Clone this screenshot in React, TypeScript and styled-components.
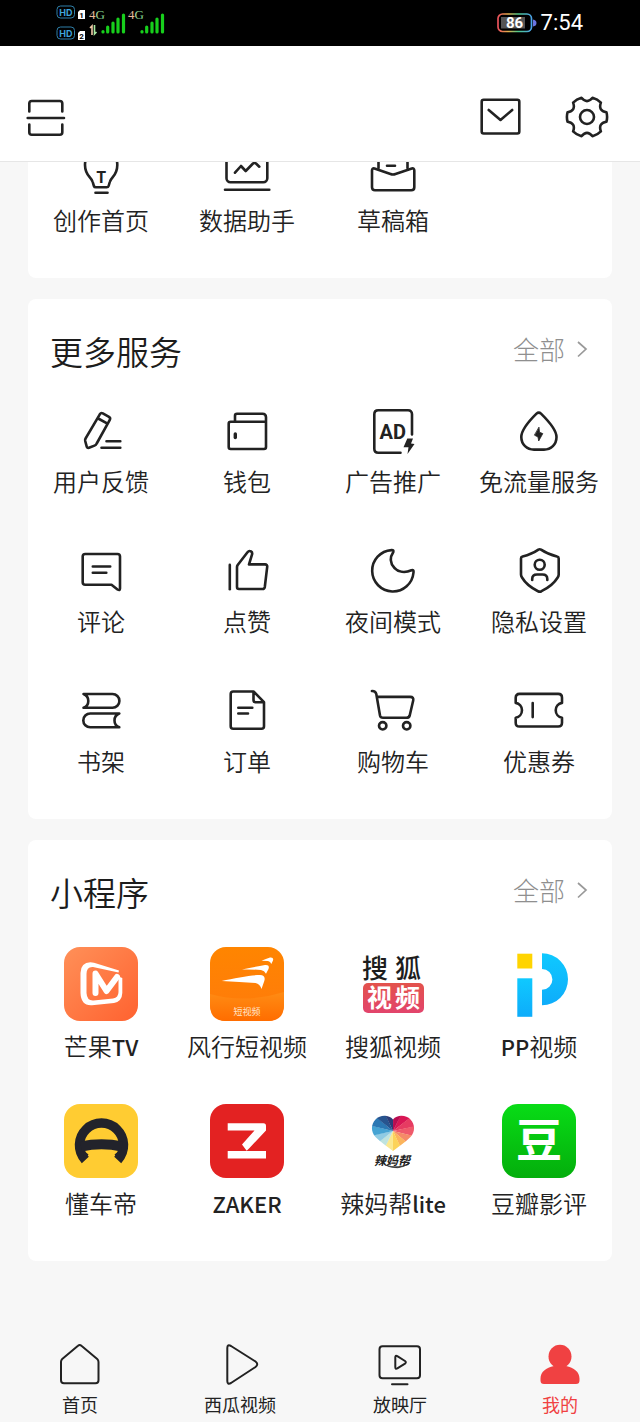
import React from "react";
import styled, { createGlobalStyle } from "styled-components";

const sans = `"Noto Sans CJK SC", "Noto Sans", sans-serif`;

const GlobalStyle = createGlobalStyle`
  * { box-sizing: border-box; }
  body { margin: 0; background: #f7f7f7; font-family: ${sans}; color: #222; }
  button { font: inherit; color: inherit; background: none; border: 0; padding: 0; cursor: pointer; }
  svg { display: block; }
`;

const Page = styled.div`
  display: flex;
  flex-direction: column;
  min-height: 100vh;
`;

const StatusBar = styled.div`
  display: flex;
  justify-content: space-between;
  height: 46px;
  padding: 0 57px 0 56px;
  background: #000;
`;

const StatusGroup = styled.div<{ $gap?: number }>`
  display: flex;
  align-items: center;
  gap: ${(p) => p.$gap ?? 0}px;
`;

const SimList = styled.div`
  display: flex;
  flex-direction: column;
  gap: 6px;
  width: 32px;
`;

const Clock = styled.time`
  font: 400 22px/24px Roboto, sans-serif;
  color: #fff;
`;

const Header = styled.header`
  display: flex;
  align-items: center;
  justify-content: space-between;
  padding: 49px 31px 22px 24px;
  background: #fff;
  border-bottom: 1px solid #e6e6e6;
`;

const HeaderActions = styled.div`
  display: flex;
  gap: 42px;
`;

const Main = styled.main`
  flex: 1;
  display: flex;
  flex-direction: column;
  gap: 21px;
  padding: 0 28px 24px;
  overflow: hidden;
`;

const Card = styled.section<{ $scrolled?: boolean }>`
  padding: ${(p) => (p.$scrolled ? 0 : 28)}px 0 42px;
  margin-top: ${(p) => (p.$scrolled ? -17 : 0)}px;
  background: #fff;
  border-radius: 8px;
`;

const CardHead = styled.div`
  display: flex;
  align-items: flex-start;
  justify-content: space-between;
  padding: 0 22px;
  margin-bottom: 31px;
`;

const Title = styled.h2`
  margin: 0;
  font-size: 33px;
  font-weight: 350;
  line-height: 48px;
  color: #1c1c1c;
`;

const MoreButton = styled.button`
  display: flex;
  align-items: center;
  gap: 10px;
  font-size: 26px;
  font-weight: 300;
  line-height: 44px;
  color: #8f8f8f;
`;

const Grid = styled.div<{ $rowGap: number }>`
  display: grid;
  grid-template-columns: repeat(4, 1fr);
  row-gap: ${(p) => p.$rowGap}px;
`;

const Cell = styled.button`
  display: flex;
  flex-direction: column;
  align-items: center;
  gap: 9px;
`;

const Label = styled.span`
  font-size: 24px;
  font-weight: 350;
  line-height: 32px;
  white-space: nowrap;
`;

const Latin = styled.span`
  font-size: 22px;
  font-weight: 500;
`;

const TabBar = styled.nav`
  display: grid;
  grid-template-columns: repeat(4, 1fr);
  padding: 8px 0 6px;
`;

const Tab = styled.button<{ $active?: boolean }>`
  display: flex;
  flex-direction: column;
  align-items: center;
  gap: 5px;
  font-size: 18px;
  line-height: 24px;
  color: ${(p) => (p.$active ? "#f04142" : "#222")};
`;

const LineSvg = styled.svg`
  fill: none;
  stroke: #222;
  stroke-width: 2.6;
  stroke-linecap: round;
  stroke-linejoin: round;
  text {
    fill: #222;
    stroke: none;
  }
`;

const TabSvg = styled(LineSvg)`
  stroke-width: 2;
`;

type Kids = { children: React.ReactNode };
const Icon = ({ children }: Kids) => (
  <LineSvg width="50" height="50" viewBox="0 0 50 50" aria-hidden>{children}</LineSvg>
);
const BarIcon = ({ children }: Kids) => (
  <LineSvg width="44" height="44" viewBox="0 0 44 44" aria-hidden>{children}</LineSvg>
);
const TabIcon = ({ children }: Kids) => (
  <TabSvg width="44" height="44" viewBox="0 0 44 44" aria-hidden>{children}</TabSvg>
);
const Logo = ({ children }: Kids) => (
  <svg width="74" height="74" viewBox="0 0 74 74" aria-hidden>{children}</svg>
);

const polar = (cx: number, cy: number, r: number, deg: number) => {
  const a = (deg * Math.PI) / 180;
  return `${(cx + r * Math.cos(a)).toFixed(2)} ${(cy + r * Math.sin(a)).toFixed(2)}`;
};

const gearPath =
  [0, 60, 120, 180, 240, 300]
    .map((a, i) => {
      const c = (r: number, d: number) => polar(22, 22, r, d);
      return `${i ? "" : `M${c(20, a - 14)}`} Q${c(20.8, a)} ${c(20, a + 14)} Q${c(12.6, a + 30)} ${c(20, a + 46)}`;
    })
    .join(" ") + "Z";

const creation = [
  {
    label: "创作首页",
    icon: (
      <Icon>
        <path d="M9 20C9 10 16 4 25.200 4S41.300 10 41.300 20C41.300 31 35 32 33.800 37L32.600 41Q32.200 42.300 30.700 42.300H19.800Q18.300 42.300 17.900 41L16.700 37C15.500 32 9 31 9 20Z" />
        <path d="M19.500 47.700H31.500" />
        <text x="25.200" y="37.800" fontSize="16" fontWeight="700" textAnchor="middle">T</text>
      </Icon>
    ),
  },
  {
    label: "数据助手",
    icon: (
      <Icon>
        <rect x="4.500" y="4" width="40.800" height="33.300" rx="4" />
        <path d="M13 27.700L19 21L23.700 26L31 18.500Q32.500 17.500 34 18.500L37.300 21.700M3 44.700H47.300" />
      </Icon>
    ),
  },
  {
    label: "草稿箱",
    icon: (
      <Icon>
        <path d="M10.500 23V8Q10.500 5 13.500 5H36.500Q39.500 5 39.500 8V23M19 20.700H27" />
        <path d="M6.500 23.500L22.500 29Q25 30 27.500 29L43.800 23.500Q46.300 23 46.300 25.500V42.300Q46.300 45.300 43.300 45.300H7Q4 45.300 4 42.300V25.500Q4 23 6.500 23.500Z" />
      </Icon>
    ),
  },
];

const services = [
  {
    label: "用户反馈",
    icon: (
      <Icon>
        <path d="M26.800 7.300L33 10.800Q34.800 12 33.800 13.800L20.700 37.500Q20 39 18.500 39.600L13 41.800Q11 42.300 10.600 40.200L9.200 35Q8.900 33.500 9.700 32.200L23.800 8.300Q25 6.400 26.800 7.300ZM22.200 12.500L31.500 17.700" />
        <path d="M30.500 35.300H44.300M25.500 41.700H44.300" />
      </Icon>
    ),
  },
  {
    label: "钱包",
    icon: (
      <Icon>
        <path d="M44 16V41Q44 43 42 43H8.700Q6.700 43 6.700 41V17.700Q6.700 15.700 8.700 15.700H44V11.200Q44 7.700 40.500 7.700H15Q13 7.700 13 9.700V15.700" />
        <path d="M13.300 28V31.500" strokeWidth="3.400" />
      </Icon>
    ),
  },
  {
    label: "广告推广",
    icon: (
      <Icon>
        <path d="M44 28.500V8.300Q44 4.300 40 4.300H10.300Q6.300 4.300 6.300 8.300V42.700Q6.300 46.700 10.300 46.700H32.500" />
        <text x="24.700" y="33" fontSize="20" fontWeight="700" textAnchor="middle" fontFamily="Roboto, sans-serif">AD</text>
        <path d="M39.300 32.500H45L43 37.500L46.500 38L39.500 48L40.500 41.200H35.500Z" fill="#222" stroke="none" />
      </Icon>
    ),
  },
  {
    label: "免流量服务",
    icon: (
      <Icon>
        <path d="M22.500 7.600Q24.800 5.500 27 7.600C33 13.500 42.500 24 42.500 31C42.500 38.500 37 43.600 30 43.600H20C13 43.600 7.300 38.500 7.300 31C7.300 24 16.500 13.500 22.500 7.600Z" />
        <path d="M25 21.500L25.500 26.200L28.800 27.600L24.700 35L24 31L20.700 29.300Z" fill="#222" stroke="#222" strokeWidth=".8" />
      </Icon>
    ),
  },
  {
    label: "评论",
    icon: (
      <Icon>
        <path d="M9.200 8H41.500Q44 8 44 10.500V42.500Q44 45 41.500 43.500L35.500 38.700H9.200Q6.700 38.700 6.700 36.200V10.500Q6.700 8 9.200 8Z" />
        <path d="M16.800 20.500H34.200M16.800 26.700H30.300" />
      </Icon>
    ),
  },
  {
    label: "点赞",
    icon: (
      <Icon>
        <path d="M7.800 18.900V43.200" />
        <path d="M15 21Q15 20 15.700 19L25.500 6.200Q27 4.300 29 5.400Q30.700 6.500 30 8.600L27 18.400H43Q45.500 18.400 45.200 20.900L42.800 41Q42.500 43 40.500 43H17Q15 43 15 41Z" />
      </Icon>
    ),
  },
  {
    label: "夜间模式",
    icon: (
      <Icon>
        <path d="M23.500 4.100A20.700 20.700 0 1 0 45.500 26.500Q46 23.300 43.500 24.300C37 27.200 30.500 26.200 26.500 22C21.800 17 22 11 25.300 6Q26 3.900 23.500 4.100Z" />
      </Icon>
    ),
  },
  {
    label: "隐私设置",
    icon: (
      <Icon>
        <path d="M24.400 3.600Q25.700 2.800 27 3.600C32 7 37 9 43 10.600Q44.700 11 44.700 12.500V28.500Q44.700 30 43.700 31.500C40 37.500 34 42 27.500 45.200Q25.700 46 24 45.200C17.500 42 11.500 37.500 8 31.500Q7 30 7 28.500V12.500Q7 11 8.600 10.600C14.500 9 19.500 7 24.400 3.600Z" />
        <circle cx="25.700" cy="18.700" r="5" />
        <path d="M18.200 34V33Q18.200 28.500 23 28.500H28.500Q33.300 28.500 33.300 33V34" />
      </Icon>
    ),
  },
  {
    label: "书架",
    icon: (
      <Icon>
        <path d="M7.500 8H36.500A6.900 6.900 0 0 1 36.500 21.800H7.500Q12.300 20 12.300 14.900T7.500 8Z" />
        <path d="M43.300 27.500H14.200A6.900 6.900 0 0 0 14.200 41.300H43.300Q38.500 39.500 38.500 34.400T43.300 27.500Z" />
      </Icon>
    ),
  },
  {
    label: "订单",
    icon: (
      <Icon>
        <path d="M11.200 5.500H31.500L42 16.200V40.300Q42 42.800 39.500 42.800H11.200Q8.700 42.800 8.700 40.300V8Q8.700 5.500 11.200 5.500ZM31.500 6V14Q31.500 16.200 33.700 16.200H41.500" />
        <path d="M16.300 21.800H30.300M16.300 27.500H26" />
      </Icon>
    ),
  },
  {
    label: "购物车",
    icon: (
      <Icon>
        <path d="M3.900 5Q7.500 4.800 8.300 8L12 29.500Q12.500 31.800 15 31.800H38.500Q41 31.800 41.700 29.500L45.200 14.500Q46 10.900 42.200 10.900H9" />
        <circle cx="14.700" cy="39.800" r="3.700" />
        <circle cx="38.700" cy="39.800" r="3.700" />
      </Icon>
    ),
  },
  {
    label: "优惠券",
    icon: (
      <Icon>
        <path d="M5.500 7.900H44.200Q48 7.900 48 11.700V16.900A7.500 7.500 0 0 0 48 31.700V36.700Q48 40.500 44.200 40.500H5.500Q1.700 40.500 1.700 36.700V31.700A7.500 7.500 0 0 0 1.700 16.900V11.700Q1.700 7.900 5.500 7.900Z" />
        <path d="M18.700 17.100V31.100" />
      </Icon>
    ),
  },
];

const heartColors = [
  "#d91654", "#e63b62", "#ef5a6b", "#f58a68", "#fbb45c", "#fcd35a",
  "#fbe88f", "#bfe3df", "#8fcbe3", "#45a3d3", "#2b78b4", "#27548f", "#2b3d78", "#b80c50",
];
const heartStep = 360 / heartColors.length;

const apps = [
  {
    label: <>芒果<Latin>TV</Latin></>,
    icon: (
      <Logo>
        <defs>
          <linearGradient id="mango" x1="0" y1="0" x2="1" y2="1">
            <stop offset="0" stopColor="#ff9058" />
            <stop offset="1" stopColor="#ff6230" />
          </linearGradient>
        </defs>
        <rect width="74" height="74" rx="16" fill="url(#mango)" />
        <path d="M55 23.500L30 15.700Q17 13.500 16.500 26V46Q17 59 28 58.200L50 56Q58 54.500 58.300 46V31L54.500 29.500V45Q54.500 50.500 49 51.500L29.500 53.500Q23 54 22.500 46V27Q22.500 19.500 29 20L54.500 25.500Z" fill="#fff" />
        <path d="M31.500 46V26.500L42.500 44L53 30" fill="none" stroke="#fff" strokeWidth="6" strokeLinejoin="round" strokeLinecap="round" />
      </Logo>
    ),
  },
  {
    label: "风行短视频",
    icon: (
      <Logo>
        <defs>
          <linearGradient id="fengxing" x1="0" y1="0" x2="0" y2="1">
            <stop offset="0" stopColor="#ff8500" />
            <stop offset="1" stopColor="#ff7a0c" />
          </linearGradient>
          <linearGradient id="fengxingWave" x1="0" y1="0" x2="0" y2="1">
            <stop offset="0" stopColor="#ff8c14" />
            <stop offset="1" stopColor="#ff6d00" />
          </linearGradient>
        </defs>
        <rect width="74" height="74" rx="16" fill="url(#fengxing)" />
        <path d="M0 47Q36 57 74 45V58Q74 74 58 74H16Q0 74 0 58Z" fill="url(#fengxingWave)" />
        <path d="M11.700 34C25 31 42 28 50 28Q56 28.300 54.300 34L51.500 42Q50 37 45.500 36Q30 34.800 11.700 34ZM32 22.500Q46 19.500 55 18Q60 17.500 58.500 22L56 26.800Q54.500 23.600 51 23Q42 22.300 32 22.500ZM51.500 13.700Q56 11.700 60 10.500Q64 10 63 13.500L61.300 17Q60.500 14.500 58 14Z" fill="#fff" />
        <text x="37" y="67.500" fontSize="9" fill="#ffe6cc" textAnchor="middle">短视频</text>
      </Logo>
    ),
  },
  {
    label: "搜狐视频",
    icon: (
      <Logo>
        <defs>
          <linearGradient id="sohu" x1="0" y1="0" x2="0" y2="1">
            <stop offset="0" stopColor="#e3524c" />
            <stop offset="1" stopColor="#e2446c" />
          </linearGradient>
        </defs>
        <text x="6" y="31" fontSize="26" fontWeight="500" fill="#1d1d1d">搜</text>
        <text x="39" y="31" fontSize="26" fontWeight="500" fill="#1d1d1d">狐</text>
        <rect x="7" y="36" width="61" height="30" rx="5" fill="url(#sohu)" />
        <text x="11" y="60" fontSize="25" fontWeight="700" fill="#fff">视</text>
        <text x="39" y="60" fontSize="25" fontWeight="700" fill="#fff">频</text>
      </Logo>
    ),
  },
  {
    label: <><Latin>PP</Latin>视频</>,
    icon: (
      <Logo>
        <defs>
          <linearGradient id="ppStem" x1="0" y1="0" x2="0" y2="1">
            <stop offset="0" stopColor="#0fc9ff" />
            <stop offset="1" stopColor="#0eacfa" />
          </linearGradient>
        </defs>
        <rect x="15.300" y="6.700" width="15" height="14.800" fill="#ffd400" />
        <rect x="15.300" y="31.300" width="15" height="38.500" fill="url(#ppStem)" />
        <path d="M40 6.300A26 26 0 0 1 40 58.300V42.800A10.400 10.400 0 0 0 40 22Z" fill="url(#ppStem)" />
      </Logo>
    ),
  },
  {
    label: "懂车帝",
    icon: (
      <Logo>
        <rect width="74" height="74" rx="16" fill="#ffcc32" />
        <path d="M21.300 56A22 22 0 1 1 53.700 56" fill="none" stroke="#22232b" strokeWidth="9.500" />
        <path d="M17 42.500Q37.500 38 58 42.500" fill="none" stroke="#22232b" strokeWidth="10" />
        <path d="M19 46L24.500 50.500L20 56ZM56 46L50.500 50.500L55 56Z" fill="#22232b" />
      </Logo>
    ),
  },
  {
    label: <Latin>ZAKER</Latin>,
    icon: (
      <Logo>
        <rect width="74" height="74" rx="16" fill="#e32222" />
        <path d="M17.700 19.300H53.500Q56 19.300 56 22V26.500L39.500 44L36.700 46.800L32 40.500L44.500 26.500H17.700ZM17.700 47H56V54.500H17.700Z" fill="#fff" />
      </Logo>
    ),
  },
  {
    label: <>辣妈帮<Latin>lite</Latin></>,
    icon: (
      <Logo>
        <defs>
          <clipPath id="heart">
            <path d="M37 15.500C41 10.500 50 10.500 54.500 15.500C59.500 21 59 28 54.500 33C50 38 43 42 37 47C31 42 24 38 19.500 33C15 28 14.500 21 19.500 15.500C24 10.500 33 10.500 37 15.500Z" />
          </clipPath>
        </defs>
        <g clipPath="url(#heart)">
          {heartColors.map((color, i) => (
            <path
              key={color}
              d={`M37 27L${polar(37, 27, 40, -64 + i * heartStep)}L${polar(37, 27, 40, -63 + (i + 1) * heartStep)}Z`}
              fill={color}
            />
          ))}
        </g>
        <text x="36" y="60.500" fontSize="12" fontWeight="700" fontStyle="italic" fill="#222" textAnchor="middle">辣妈帮</text>
        <path d="M29 61Q42 67.500 54 59Q43 65.500 29 61Z" fill="#222" stroke="#222" strokeWidth=".6" />
      </Logo>
    ),
  },
  {
    label: "豆瓣影评",
    icon: (
      <Logo>
        <defs>
          <linearGradient id="douban" x1="0" y1="0" x2="0" y2="1">
            <stop offset="0" stopColor="#08dc16" />
            <stop offset="1" stopColor="#04ae0c" />
          </linearGradient>
        </defs>
        <rect width="74" height="74" rx="16" fill="url(#douban)" />
        <text x="37" y="53" fontSize="46" fontWeight="700" fill="#fff" textAnchor="middle">豆</text>
      </Logo>
    ),
  },
];

const tabs = [
  {
    label: "首页",
    icon: (
      <TabIcon>
        <path d="M20 2.800Q21.700 1.300 23.400 2.800L39.200 16Q40.500 17.200 40.500 19V37.300Q40.500 40.300 37.500 40.300H6Q3 40.300 3 37.300V19Q3 17.200 4.200 16Z" />
      </TabIcon>
    ),
  },
  {
    label: "西瓜视频",
    icon: (
      <TabIcon>
        <path d="M9.300 5Q9.300 1 13 3L37.500 18.500Q41 21.300 37.500 24L13 40Q9.300 42 9.300 38Z" />
      </TabIcon>
    ),
  },
  {
    label: "放映厅",
    icon: (
      <TabIcon>
        <rect x="1.500" y="3.300" width="40.500" height="32" rx="3" />
        <path d="M17.300 14.500Q17.300 12 19.300 13.200L27 18Q28.700 19.300 27 20.600L19.300 25.400Q17.300 26.500 17.300 24ZM14 41.300H29.500" />
      </TabIcon>
    ),
  },
  {
    label: "我的",
    active: true,
    icon: (
      <TabIcon>
        <g fill="#f04142" stroke="none">
          <ellipse cx="22" cy="13.500" rx="11.500" ry="11.800" />
          <path d="M16 20H28V23C36 24.500 41.500 29 41.500 35.500V37.500Q41.500 41 38 41H6Q2.500 41 2.500 37.500V35.500C2.500 29 8 24.500 16 23Z" />
        </g>
      </TabIcon>
    ),
  },
];

const SimBadge = ({ slot }: { slot: number }) => (
  <svg width="30" height="15" viewBox="0 0 30 15" aria-hidden>
    <rect x="1" y="1" width="17.500" height="12" rx="3.500" fill="none" stroke="#2f7fa8" />
    <text x="9.800" y="10.500" fontSize="9" fontWeight="700" fill="#3fa5dc" textAnchor="middle" fontFamily="Inter, sans-serif">HD</text>
    <path d="M24 5H29V14H22V7Z" fill="#fff" />
    <text x="25.600" y="12.800" fontSize="8" fontWeight="700" fill="#000" textAnchor="middle" fontFamily="Roboto, sans-serif">{slot}</text>
  </svg>
);

const Signal = ({ data }: { data?: boolean }) => (
  <svg width="39" height="34" viewBox="0 0 39 34" aria-hidden>
    <defs>
      <linearGradient id="netText">
        <stop offset=".3" stopColor="#f0b898" />
        <stop offset=".6" stopColor="#86dc92" />
      </linearGradient>
    </defs>
    <text x="1" y="12.500" fontSize="13" fill="url(#netText)" fontFamily="'Liberation Serif', serif">4G</text>
    {data && (
      <g fill="none" strokeWidth="1.600">
        <path d="M2 22L4 20V29" stroke="#f0c9a8" />
        <path d="M6.500 19V28L8.500 26" stroke="#a8e8a0" />
      </g>
    )}
    <path d="M15 25.500V26M19.700 21V26M25 17V26M30 13V26M35.500 9V26" stroke="#17cf1c" strokeWidth="3.200" strokeLinecap="round" />
  </svg>
);

const Battery = () => (
  <svg width="40" height="20" viewBox="0 0 40 20" role="img" aria-label="86%">
    <defs>
      <linearGradient id="battery">
        <stop offset="0" stopColor="#e8505b" />
        <stop offset=".3" stopColor="#e8b04a" />
        <stop offset=".6" stopColor="#4fc98a" />
        <stop offset="1" stopColor="#4aa3e8" />
      </linearGradient>
    </defs>
    <rect x="1" y="1" width="33.500" height="17.500" rx="4.500" fill="none" stroke="url(#battery)" strokeWidth="1.700" />
    <rect x="4" y="4" width="24" height="11.500" fill="#555" />
    <path d="M36 6.500Q39.500 7 39.500 10T36 13.500Z" fill="#6b74e0" />
    <text x="17.500" y="15.300" fontSize="15" fontWeight="700" fill="#fff" textAnchor="middle" fontFamily="Roboto, sans-serif">86</text>
  </svg>
);

const More = () => (
  <MoreButton type="button">
    全部
    <svg width="15" height="20" viewBox="0 0 15 20" fill="none" stroke="#999" strokeWidth="1.700" aria-hidden>
      <path d="M3 3L11 10L3 17.500" />
    </svg>
  </MoreButton>
);

export default function App() {
  return (
    <Page>
      <GlobalStyle />
      <StatusBar>
        <StatusGroup>
          <SimList>
            <SimBadge slot={1} />
            <SimBadge slot={2} />
          </SimList>
          <Signal data />
          <Signal />
        </StatusGroup>
        <StatusGroup $gap={4}>
          <Battery />
          <Clock>7:54</Clock>
        </StatusGroup>
      </StatusBar>
      <Header>
        <button type="button" aria-label="扫一扫">
          <BarIcon>
            <path d="M5.300 16.500V8.500Q5.300 6 7.800 6H35.800Q38.300 6 38.300 8.500V16.500M5.300 29.500V37.200Q5.300 39.700 7.800 39.700H35.800Q38.300 39.700 38.300 37.200V29.500M3.700 23H40" />
          </BarIcon>
        </button>
        <HeaderActions>
          <button type="button" aria-label="消息">
            <BarIcon>
              <rect x="2.700" y="4.700" width="37.600" height="33.800" rx="2" />
              <path d="M9.700 15L21.500 25L33.200 15" />
            </BarIcon>
          </button>
          <button type="button" aria-label="设置">
            <BarIcon>
              <path d={gearPath} />
              <circle cx="22" cy="22" r="7" />
            </BarIcon>
          </button>
        </HeaderActions>
      </Header>
      <Main>
        <Card $scrolled>
          <Grid $rowGap={49}>
            {creation.map((item) => (
              <Cell type="button" key={item.label}>
                {item.icon}
                <Label>{item.label}</Label>
              </Cell>
            ))}
          </Grid>
        </Card>
        <Card>
          <CardHead>
            <Title>更多服务</Title>
            <More />
          </CardHead>
          <Grid $rowGap={49}>
            {services.map((item) => (
              <Cell type="button" key={item.label}>
                {item.icon}
                <Label>{item.label}</Label>
              </Cell>
            ))}
          </Grid>
        </Card>
        <Card>
          <CardHead>
            <Title>小程序</Title>
            <More />
          </CardHead>
          <Grid $rowGap={42}>
            {apps.map((item, i) => (
              <Cell type="button" key={i}>
                {item.icon}
                <Label>{item.label}</Label>
              </Cell>
            ))}
          </Grid>
        </Card>
      </Main>
      <TabBar>
        {tabs.map((tab) => (
          <Tab type="button" key={tab.label} $active={tab.active}>
            {tab.icon}
            {tab.label}
          </Tab>
        ))}
      </TabBar>
    </Page>
  );
}
